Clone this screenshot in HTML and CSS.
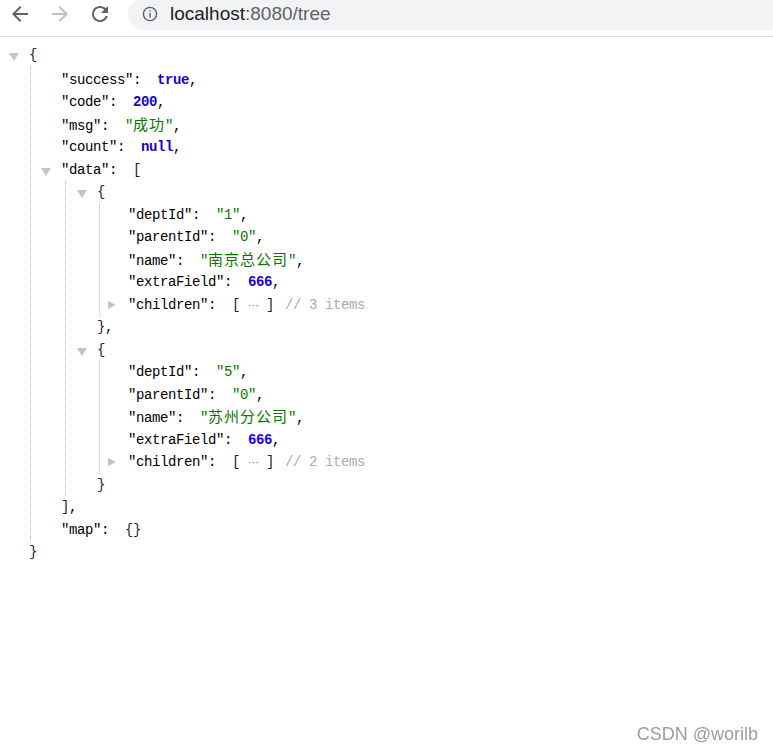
FILE: index.html
```html
<!DOCTYPE html>
<html>

<head>
    <meta charset="utf-8" />
    <title>localhost:8080/tree</title>
    <meta name="viewport" content="width=device-width, initial-scale=1">
    <link rel="stylesheet" href="styles.css">
</head>

<body>
    <div class="topbar">
        <span class="navbtn">
            <svg width="24" height="24" viewBox="0 0 24 24"><path fill="#5f6368" d="M20 11H7.83l5.59-5.59L12 4l-8 8 8 8 1.41-1.41L7.83 13H20v-2z"/></svg>
        </span>
        <span class="navbtn">
            <svg width="24" height="24" viewBox="0 0 24 24"><path fill="#bdc1c6" d="M12 4l-1.41 1.41L16.17 11H4v2h12.17l-5.58 5.59L12 20l8-8z"/></svg>
        </span>
        <span class="navbtn">
            <svg width="24" height="24" viewBox="0 0 24 24"><path fill="#5f6368" d="M17.65 6.35C16.2 4.9 14.21 4 12 4c-4.42 0-7.99 3.58-7.99 8s3.57 8 7.99 8c3.73 0 6.84-2.55 7.73-6h-2.08c-.82 2.33-3.04 4-5.65 4-3.31 0-6-2.69-6-6s2.69-6 6-6c1.66 0 3.14.69 4.22 1.78L13 11h7V4l-2.35 2.35z"/></svg>
        </span>
        <div class="omnibox">
            <svg class="info" width="16" height="16" viewBox="0 0 16 16">
                <circle cx="8" cy="8" r="6.6" fill="none" stroke="#5f6368" stroke-width="1.4"/>
                <rect x="7.3" y="7" width="1.4" height="4.6" fill="#5f6368"/>
                <rect x="7.3" y="4.3" width="1.4" height="1.4" fill="#5f6368"/>
            </svg>
            <span class="host">localhost</span><span class="path">:8080/tree</span>
        </div>
    </div>

    <div class="viewer">
        <div class="line"><span class="toggle down"></span><span class="br">{</span></div>
        <div class="kids root">
            <div class="line"><span class="key">"success"</span>:  <span class="kw">true</span>,</div>
            <div class="line"><span class="key">"code"</span>:  <span class="kw">200</span>,</div>
            <div class="line"><span class="key">"msg"</span>:  <span class="str">"<span class="cjk">成功</span>"</span>,</div>
            <div class="line"><span class="key">"count"</span>:  <span class="kw">null</span>,</div>
            <div class="line"><span class="toggle down"></span><span class="key">"data"</span>:  <span class="br">[</span></div>
            <div class="kids arr">
                <div class="line"><span class="toggle down"></span><span class="br">{</span></div>
                <div class="kids obj">
                    <div class="line"><span class="key">"deptId"</span>:  <span class="str">"1"</span>,</div>
                    <div class="line"><span class="key">"parentId"</span>:  <span class="str">"0"</span>,</div>
                    <div class="line"><span class="key">"name"</span>:  <span class="str">"<span class="cjk">南京总公司</span>"</span>,</div>
                    <div class="line"><span class="key">"extraField"</span>:  <span class="kw">666</span>,</div>
                    <div class="line"><span class="toggle right"></span><span class="key">"children"</span>:  <span class="br">[ <span class="dots">⋯</span> ]</span> <span class="comment">// 3 items</span></div>
                </div>
                <div class="line"><span class="br">}</span>,</div>
                <div class="line"><span class="toggle down"></span><span class="br">{</span></div>
                <div class="kids obj">
                    <div class="line"><span class="key">"deptId"</span>:  <span class="str">"5"</span>,</div>
                    <div class="line"><span class="key">"parentId"</span>:  <span class="str">"0"</span>,</div>
                    <div class="line"><span class="key">"name"</span>:  <span class="str">"<span class="cjk">苏州分公司</span>"</span>,</div>
                    <div class="line"><span class="key">"extraField"</span>:  <span class="kw">666</span>,</div>
                    <div class="line"><span class="toggle right"></span><span class="key">"children"</span>:  <span class="br">[ <span class="dots">⋯</span> ]</span> <span class="comment">// 2 items</span></div>
                </div>
                <div class="line"><span class="br">}</span></div>
            </div>
            <div class="line"><span class="br">]</span>,</div>
            <div class="line"><span class="key">"map"</span>:  <span class="br">{}</span></div>
        </div>
        <div class="line"><span class="br">}</span></div>
    </div>

    <div class="watermark">CSDN @worilb</div>
</body>

</html>
```

FILE: styles.css
```css
body {
    margin: 0;
    background: #fff;
    font-family: "Liberation Sans", Arial, sans-serif;
}

.topbar {
    display: flex;
    align-items: flex-start;
    height: 36px;
    border-bottom: 1px solid #dadce0;
}

.navbtn {
    display: flex;
    align-items: center;
    justify-content: center;
    width: 40px;
    height: 28px;
}

.omnibox {
    display: flex;
    align-items: center;
    flex: 1;
    height: 32px;
    margin-top: -2px;
    margin-left: 8px;
    background: #f1f3f4;
    border-radius: 16px 0 0 16px;
}

.omnibox .info {
    margin-left: 14px;
    margin-right: 12px;
}

.host {
    font-size: 19px;
    color: #202124;
}

.path {
    font-size: 19px;
    color: #5f6368;
}

.viewer {
    padding: 7px 0 0 29px;
    font-family: "Liberation Mono", "Courier New", monospace;
    font-size: 14px;
    letter-spacing: -0.4px;
    color: #000;
}

.line {
    position: relative;
    height: 22.5px;
    line-height: 22.5px;
    white-space: pre;
}

.kids {
    border-left: 1px dotted #b8b8b8;
}

.kids.root {
    margin-left: 1px;
    padding: 2px 0 0 30px;
}

.kids.arr {
    margin-left: 4px;
    padding-left: 31px;
}

.kids.obj {
    margin-left: 2px;
    padding-left: 28px;
}

.toggle {
    position: absolute;
    left: -20px;
    width: 0;
    height: 0;
}

.toggle.down {
    top: 9px;
    border-left: 5px solid transparent;
    border-right: 5px solid transparent;
    border-top: 8px solid #c4c4c4;
}

.toggle.right {
    top: 7px;
    border-top: 4.5px solid transparent;
    border-bottom: 4.5px solid transparent;
    border-left: 8px solid #c4c4c4;
}

.key {
    color: #000;
}

.str {
    color: #0b7500;
}

.kw {
    color: #1a01cc;
    font-weight: bold;
}

.br {
    color: #2b1d1d;
}

.cjk {
    font-family: "Noto Sans CJK SC", sans-serif;
    font-size: 15px;
    letter-spacing: 1px;
    line-height: 20px;
}

.dots {
    display: inline-block;
    width: 10px;
    text-align: center;
    font-family: "DejaVu Sans", sans-serif;
    font-size: 11px;
    letter-spacing: 0;
    color: #777;
}

.comment {
    margin-left: 3px;
    color: #aaa;
}

.watermark {
    position: fixed;
    right: 15px;
    bottom: 5px;
    font-size: 18px;
    color: #9c9c9c;
}
```
